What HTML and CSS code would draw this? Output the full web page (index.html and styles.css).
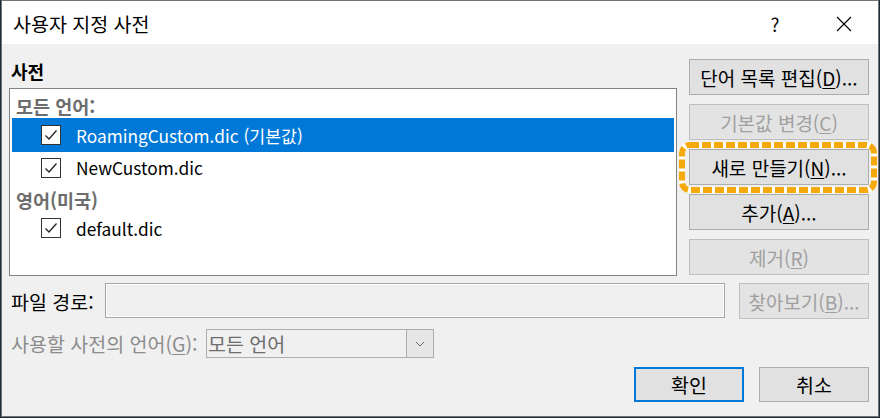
FILE: index.html
```html
<!DOCTYPE html>
<html lang="ko">
<head>
<meta charset="utf-8">
<title>사용자 지정 사전</title>
<link rel="stylesheet" href="styles.css">
</head>
<body>
<div class="dialog">
  <div class="titlebar">
    <span class="title">사용자 지정 사전</span>
    <span class="help">?</span>
    <span class="close">
      <svg width="16" height="16" viewBox="0 0 16 16"><path d="M1 1 L15 15 M15 1 L1 15" stroke="#000" stroke-width="1.1" fill="none"/></svg>
    </span>
  </div>
  <div class="content">
    <div class="top">
      <div class="left">
        <div class="section-label">사전</div>
        <div class="listbox">
          <div class="group group-first">모든 언어:</div>
          <div class="item selected">
            <span class="check"><svg width="18" height="18" viewBox="0 0 18 18"><path d="M3.5 9.5 L7 13 L14.5 4.5" stroke="#222" stroke-width="1.3" fill="none"/></svg></span>
            <span class="name">RoamingCustom.dic (기본값)</span>
          </div>
          <div class="item item-second">
            <span class="check"><svg width="18" height="18" viewBox="0 0 18 18"><path d="M3.5 9.5 L7 13 L14.5 4.5" stroke="#222" stroke-width="1.3" fill="none"/></svg></span>
            <span class="name">NewCustom.dic</span>
          </div>
          <div class="group group-second">영어(미국)</div>
          <div class="item item-third">
            <span class="check"><svg width="18" height="18" viewBox="0 0 18 18"><path d="M3.5 9.5 L7 13 L14.5 4.5" stroke="#222" stroke-width="1.3" fill="none"/></svg></span>
            <span class="name">default.dic</span>
          </div>
        </div>
      </div>
      <div class="side-buttons">
        <button class="btn">단어 목록 편집(<u>D</u>)...</button>
        <button class="btn disabled">기본값 변경(<u>C</u>)</button>
        <div class="focus-wrap">
          <button class="btn">새로 만들기(<u>N</u>)...</button>
          <svg class="highlight" width="198" height="51" viewBox="0 0 198 51">
            <rect x="3" y="3" width="192" height="45" rx="8" ry="8" fill="none" stroke="#ffffff" stroke-width="6"/>
            <rect x="3" y="3" width="192" height="45" rx="8" ry="8" fill="none" stroke="#f6a90c" stroke-width="6" stroke-dasharray="9 3"/>
          </svg>
        </div>
        <button class="btn">추가(<u>A</u>)...</button>
        <button class="btn disabled">제거(<u>R</u>)</button>
      </div>
    </div>
    <div class="path-row">
      <span class="path-label">파일 경로:</span>
      <div class="path-input"></div>
      <button class="btn disabled browse">찾아보기(<u>B</u>)...</button>
    </div>
    <div class="lang-row">
      <span class="lang-label">사용할 사전의 언어(<u>G</u>):</span>
      <div class="combo">
        <span class="combo-text">모든 언어</span>
        <span class="combo-arrow"><svg width="10" height="6" viewBox="0 0 10 6"><path d="M1 1 L5 5 L9 1" stroke="#666" stroke-width="1" fill="none"/></svg></span>
      </div>
    </div>
    <div class="action-row">
      <button class="btn action default">확인</button>
      <button class="btn action">취소</button>
    </div>
  </div>
</div>
</body>
</html>
```

FILE: styles.css
```css
* { box-sizing: border-box; }
html, body {
  margin: 0;
  padding: 0;
  background: #1d2a38;
  height: 418px;
  overflow: hidden;
}
body {
  padding-left: 1px;
  font-family: "Noto Sans CJK KR", "Noto Sans", sans-serif;
  font-size: 19px;
  color: #000;
}
.dialog {
  width: 878px;
  height: 417px;
  border: 1px solid #737373;
  background: #f0f0f0;
  display: flex;
  flex-direction: column;
}
.titlebar {
  height: 43px;
  background: #fff;
  display: flex;
  align-items: center;
  padding-left: 11px;
  padding-top: 2px;
  flex: none;
}
.title {
  flex: 1;
  font-size: 19.5px;
}
.help {
  font-size: 19px;
  width: 20px;
  text-align: center;
  margin-right: 51px;
  color: #111;
}
.close {
  width: 16px;
  height: 16px;
  margin-right: 26px;
  display: flex;
}
.content {
  flex: 1;
  padding: 15px 9px 0 7px;
  display: flex;
  flex-direction: column;
}
.top {
  display: flex;
  gap: 12px;
}
.left {
  width: 668px;
  display: flex;
  flex-direction: column;
}
.section-label {
  font-weight: bold;
  font-size: 18px;
  height: 24px;
  line-height: 24px;
  padding-left: 2px;
}
.listbox {
  margin-top: 5px;
  height: 188px;
  background: #fff;
  border: 1px solid #828282;
  padding: 0 2px;
}
.group {
  padding-left: 4px;
  color: #6d6d6d;
  font-weight: bold;
  font-size: 18.5px;
  line-height: 24px;
}
.group-first {
  height: 29px;
  padding-top: 5px;
}
.group-second {
  height: 32px;
  padding-top: 5px;
}
.item {
  display: flex;
  align-items: center;
  padding-left: 29px;
}
.item.selected {
  background: #0078d7;
  color: #fff;
  height: 34px;
}
.item-second {
  height: 31px;
}
.item-third {
  height: 26px;
}
.check {
  width: 20px;
  height: 20px;
  flex: none;
  border: 1px solid #333;
  background: #fff;
  display: flex;
  align-items: center;
  justify-content: center;
  margin-right: 15px;
}
.name {
  font-size: 17.3px;
}
.side-buttons {
  width: 180px;
  display: flex;
  flex-direction: column;
  gap: 9px;
}
.btn {
  font-family: inherit;
  font-size: 19px;
  color: #000;
  background: #e1e1e1;
  border: 1px solid #adadad;
  height: 36px;
  width: 100%;
  padding: 0;
  margin: 0;
  display: flex;
  align-items: center;
  justify-content: center;
}
.btn u {
  text-decoration-thickness: 1px;
  text-underline-offset: 2px;
}
.btn.disabled {
  color: #a0a0a0;
  border-color: #bfbfbf;
  background: #e3e3e3;
}
.focus-wrap {
  position: relative;
}
.highlight {
  position: absolute;
  left: -10px;
  top: -7px;
}
.path-row {
  margin-top: 7px;
  height: 36px;
  display: flex;
  align-items: center;
}
.path-label {
  width: 96px;
  padding-left: 2px;
  flex: none;
  font-size: 19.5px;
}
.path-input {
  width: 620px;
  height: 35px;
  align-self: flex-start;
  border: 1px solid #a5a5a5;
  box-shadow: inset 0 0 0 1px #fff;
  background: #f0f0f0;
}
.browse {
  width: 130px;
  margin-left: 14px;
}
.lang-row {
  margin-top: 10px;
  height: 29px;
  display: flex;
  align-items: center;
}
.lang-label {
  width: 197px;
  padding-left: 2px;
  color: #8c8c8c;
  flex: none;
  font-size: 19.5px;
}
.lang-label u {
  text-decoration-thickness: 1px;
  text-underline-offset: 2px;
}
.combo {
  width: 228px;
  height: 29px;
  border: 1px solid #adadad;
  background: #f0f0f0;
  display: flex;
  align-items: center;
}
.combo-text {
  flex: 1;
  color: #6d6d6d;
  padding-left: 1px;
  font-size: 19.5px;
}
.combo-arrow {
  width: 27px;
  height: 100%;
  background: #e6e6e6;
  border-left: 1px solid #adadad;
  display: flex;
  align-items: center;
  justify-content: center;
}
.action-row {
  margin-top: 9px;
  display: flex;
  justify-content: flex-end;
  gap: 15px;
}
.action {
  width: 110px;
  height: 35px;
  font-size: 19.5px;
}
.action.default {
  border: 2px solid #0078d7;
}
```
